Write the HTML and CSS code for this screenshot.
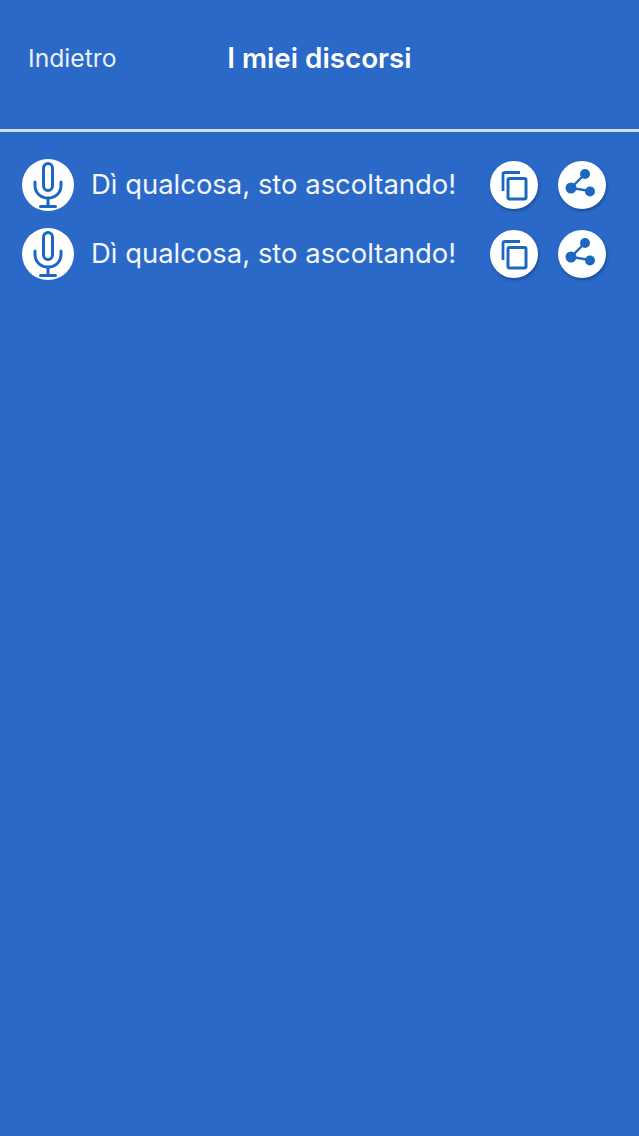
FILE: index.html
```html
<!DOCTYPE html>
<html lang="it">
<head>
    <meta charset="UTF-8">
    <title>I miei discorsi</title>
    <link rel="stylesheet" href="styles.css">
</head>
<body>
    <svg class="defs" width="0" height="0">
        <symbol id="mic" viewBox="0 0 52 52">
            <rect x="21.500" y="4.500" width="9" height="27" rx="4.500" fill="none" stroke="#1c68c0" stroke-width="3"/>
            <path d="M13 23v3c0 8 5.500 13 13 13s13-5 13-13v-3" fill="none" stroke="#1c68c0" stroke-width="3" stroke-linecap="round"/>
            <path d="M26 39v8M18.500 47.500h15" fill="none" stroke="#1c68c0" stroke-width="3" stroke-linecap="round"/>
        </symbol>
        <symbol id="copy" viewBox="0 0 48 48">
            <path d="M13 30V13.500q0-2 2-2h15" fill="none" stroke="#1c68c0" stroke-width="2.800"/>
            <rect x="18" y="17.500" width="18" height="20.500" rx="1.500" fill="none" stroke="#1c68c0" stroke-width="3"/>
        </symbol>
        <symbol id="share" viewBox="0 0 48 48">
            <path d="M27 13L13 27l19 3" fill="none" stroke="#1c68c0" stroke-width="2.400"/>
            <circle cx="27" cy="13" r="5" fill="#1c68c0"/>
            <circle cx="13" cy="27" r="5.500" fill="#1c68c0"/>
            <circle cx="32" cy="30.500" r="5" fill="#1c68c0"/>
        </symbol>
    </svg>

    <header class="topbar">
        <a class="back">Indietro</a>
        <h1 class="title">I miei discorsi</h1>
    </header>

    <ul class="speeches">
        <li class="speech">
            <span class="mic-badge"><svg><use href="#mic"/></svg></span>
            <span class="speech-text">Dì qualcosa, sto ascoltando!</span>
            <span class="action"><svg><use href="#copy"/></svg></span>
            <span class="action"><svg><use href="#share"/></svg></span>
        </li>
        <li class="speech">
            <span class="mic-badge"><svg><use href="#mic"/></svg></span>
            <span class="speech-text">Dì qualcosa, sto ascoltando!</span>
            <span class="action"><svg><use href="#copy"/></svg></span>
            <span class="action"><svg><use href="#share"/></svg></span>
        </li>
    </ul>
</body>
</html>
```
FILE: styles.css
```css
*{
    margin: 0;
    padding: 0;
}
html,body{
    height: 100%;
}
body{
    background-color: #2a69c8;
    color: #fff;
    font-family: Inter, "Liberation Sans", sans-serif;
    overflow: hidden;
}
.defs{
    display: block;
    height: 0;
}
/* header */
.topbar{
    box-sizing: border-box;
    border-bottom: 3px solid #cfdcf0;
    height: 132px;
    display: grid;
    grid-template-columns: 1fr auto 1fr;
    align-items: start;
    padding-top: 43px;
}
.back{
    padding-left: 28px;
    font-size: 24.700px;
    line-height: 30px;
    color: #e9f0fa;
}
.title{
    font-size: 27.800px;
    line-height: 30px;
    font-weight: 600;
}
/* list */
.speeches{
    list-style: none;
    padding-top: 27px;
    display: flex;
    flex-direction: column;
    gap: 17px;
}
.speech{
    height: 52px;
    display: flex;
    align-items: center;
    padding-left: 22px;
}
.mic-badge{
    width: 52px;
    height: 52px;
    border-radius: 50%;
    background-color: #fff;
    flex: none;
}
.mic-badge svg{
    display: block;
    width: 52px;
    height: 52px;
}
.speech-text{
    width: 416px;
    padding: 0 0 2px 17px;
    box-sizing: border-box;
    font-size: 27.450px;
    white-space: nowrap;
    color: #f2f6fc;
}
.action{
    width: 48px;
    height: 48px;
    margin-right: 20px;
    border-radius: 50%;
    background-color: #fff;
    box-shadow: 1px 2px 3px rgba(10, 40, 90, 0.45);
    flex: none;
}
.action svg{
    display: block;
    width: 48px;
    height: 48px;
}
```
